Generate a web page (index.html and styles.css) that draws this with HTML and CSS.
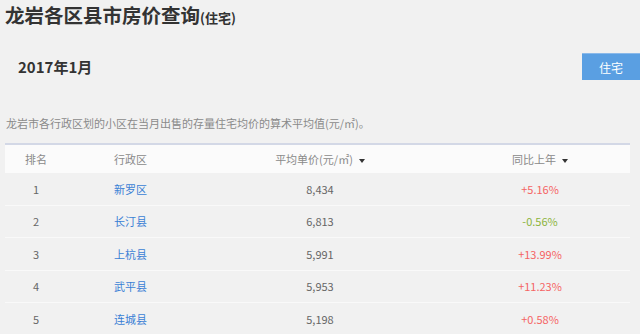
FILE: index.html
```html
<!DOCTYPE html>
<html lang="zh">
<head>
<meta charset="utf-8">
<link rel="stylesheet" href="styles.css">
</head>
<body>
<div class="page">
  <h1 class="title">龙岩各区县市房价查询<span class="title-sub">(住宅)</span></h1>
  <div class="bar">
    <div class="date">2017年1月</div>
    <div class="btn">住宅</div>
  </div>
  <p class="desc">龙岩市各行政区划的小区在当月出售的存量住宅均价的算术平均值(元/㎡)。</p>
  <div class="table">
    <div class="row head">
      <div class="c c1">排名</div>
      <div class="c c2">行政区</div>
      <div class="c c3">平均单价(元/㎡)<i class="tri"></i></div>
      <div class="c c4">同比上年<i class="tri"></i></div>
    </div>
    <div class="row">
      <div class="c c1">1</div>
      <div class="c c2"><a class="link">新罗区</a></div>
      <div class="c c3">8,434</div>
      <div class="c c4 up">+5.16%</div>
    </div>
    <div class="row">
      <div class="c c1">2</div>
      <div class="c c2"><a class="link">长汀县</a></div>
      <div class="c c3">6,813</div>
      <div class="c c4 down">-0.56%</div>
    </div>
    <div class="row">
      <div class="c c1">3</div>
      <div class="c c2"><a class="link">上杭县</a></div>
      <div class="c c3">5,991</div>
      <div class="c c4 up">+13.99%</div>
    </div>
    <div class="row">
      <div class="c c1">4</div>
      <div class="c c2"><a class="link">武平县</a></div>
      <div class="c c3">5,953</div>
      <div class="c c4 up">+11.23%</div>
    </div>
    <div class="row">
      <div class="c c1">5</div>
      <div class="c c2"><a class="link">连城县</a></div>
      <div class="c c3">5,198</div>
      <div class="c c4 up">+0.58%</div>
    </div>
  </div>
</div>
</body>
</html>
```
FILE: styles.css
```css
html, body {
  margin: 0;
  padding: 0;
  background: #f1f1f1;
}
body {
  font-family: "Noto Sans CJK SC", "Noto Sans", sans-serif;
  color: #555;
  overflow: hidden;
}
.page {
  width: 640px;
}
.title {
  margin: 0;
  padding-left: 5px;
  height: 30px;
  line-height: 30px;
  font-size: 19.5px;
  font-weight: bold;
  color: #333;
  letter-spacing: 0;
}
.title-sub {
  font-size: 13px;
  font-weight: bold;
}
.bar {
  margin-top: 23px;
  height: 27px;
  display: flex;
  align-items: center;
  justify-content: space-between;
}
.date {
  padding-left: 18px;
  font-size: 15px;
  font-weight: bold;
  color: #333;
}
.btn {
  width: 58px;
  height: 27px;
  box-sizing: border-box;
  border-top: 1px solid #8ab9ea;
  background: #5a9fe2;
  color: #fff;
  font-size: 12px;
  display: flex;
  align-items: center;
  justify-content: center;
}
.desc {
  margin: 35px 0 0 0;
  padding-left: 6px;
  font-size: 11px;
  line-height: 16px;
  color: #8a8a8a;
}
.table {
  margin: 12px 0 0 5px;
  width: 625px;
  border-top: 2px solid #d3d8e6;
}
.row {
  display: grid;
  grid-template-columns: 62px 123px 260px 180px;
  height: 31.5px;
  align-items: center;
  border-bottom: 1px solid #f9f9f9;
  font-size: 11px;
  color: #666;
}
.row.head {
  height: 28px;
  border-bottom: none;
  background: #fbfbfb;
  color: #8a8a8a;
}
.c1 { text-align: center; }
.c2 { padding-left: 47px; }
.c3 { text-align: center; }
.c4 { text-align: center; }
.link {
  color: #3a7fd5;
  text-decoration: none;
}
.up { color: #f56464; }
.down { color: #8cb43c; }
.tri {
  display: inline-block;
  width: 0;
  height: 0;
  margin-left: 6px;
  vertical-align: middle;
  border-left: 3.5px solid transparent;
  border-right: 3.5px solid transparent;
  border-top: 4px solid #333;
}
```
